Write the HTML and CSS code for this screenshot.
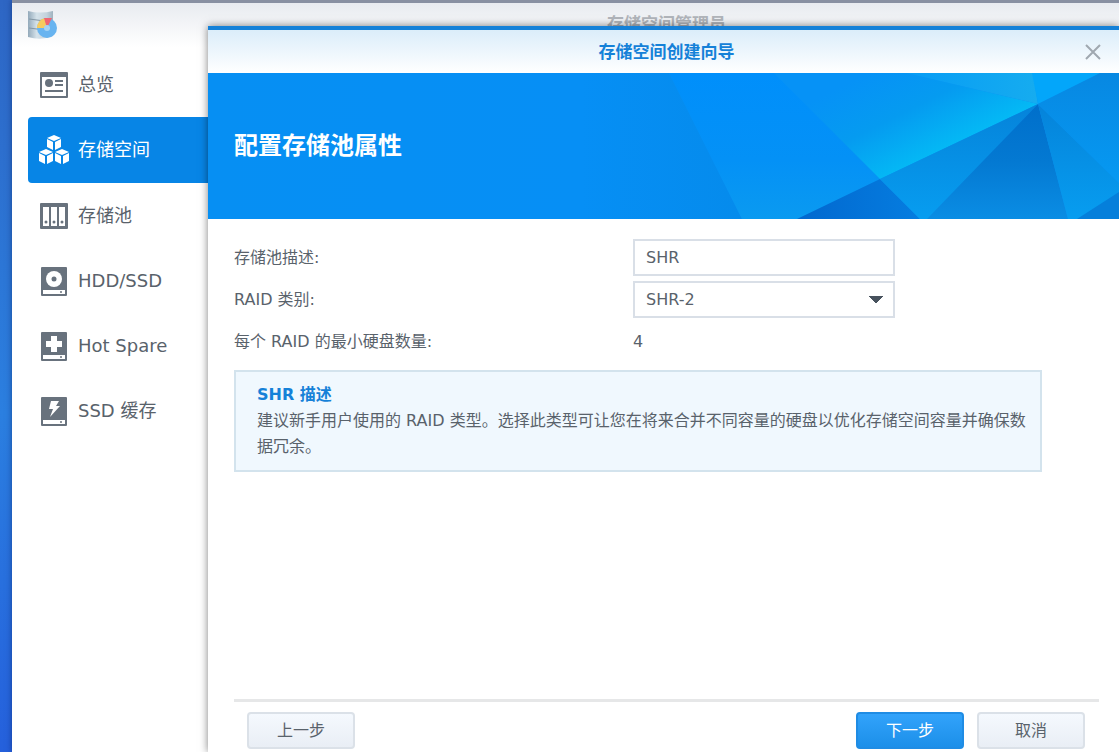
FILE: index.html
```html
<!DOCTYPE html>
<html lang="zh-CN">
<head>
    <meta charset="UTF-8">
    <meta name="viewport" content="width=device-width, initial-scale=1.0">
    <title>存储空间管理员</title>
    <link rel="stylesheet" href="styles.css">
</head>
<body>
    <div class="desktop">
        <div class="window">
            <header class="window-header">
                <svg class="app-icon" width="32" height="30" viewBox="0 0 32 30">
                    <defs>
                        <linearGradient id="disk" x1="0" x2="1" y1="0" y2="0">
                            <stop offset="0" stop-color="#93a9ba"/>
                            <stop offset="0.35" stop-color="#d5e2ea"/>
                            <stop offset="0.75" stop-color="#c3d2dc"/>
                            <stop offset="1" stop-color="#9fb2bf"/>
                        </linearGradient>
                    </defs>
                    <path d="M1 1q12 3 25 0v25q-12 5-25 1z" fill="url(#disk)"/>
                    <path d="M2 9q12 3 23 0M2 18q12 3 23 0" fill="none" stroke="#8497a5" stroke-width="1"/>
                    <circle cx="20" cy="18" r="10" fill="#68b4f0"/>
                    <path d="M20 18H10a10 10 0 0 1 8-10z" fill="#f6cb5e"/>
                    <path d="M20 18L17 8h8z" fill="#ee6573"/>
                    <circle cx="20" cy="18" r="3" fill="#a5d3f4"/>
                </svg>
                <h1 class="window-title">存储空间管理员</h1>
            </header>

            <nav class="sidebar">
                <a class="nav-item" href="#overview">
                    <svg class="nav-icon" viewBox="0 0 30 30">
                        <path fill-rule="evenodd" d="M2 2h26q1 0 1 1v24q0 1-1 1H2q-1 0-1-1V3q0-1 1-1zm1 5v19h24V7z"/>
                        <circle cx="10" cy="13" r="4"/>
                        <path d="M16 10h8v2h-8zM16 14h8v2h-8zM6 20h18v2H6z"/>
                    </svg>
                    <span>总览</span>
                </a>
                <a class="nav-item active" href="#volume">
                    <svg class="nav-icon" viewBox="0 0 30 30">
                        <g id="cube">
                            <path d="M15 0l7 3-7 3-7-3z"/>
                            <path d="M8 4l6 3v8l-6-3z"/>
                            <path d="M22 4l-6 3v8l6-3z"/>
                        </g>
                        <use href="#cube" x="-8" y="14"/>
                        <use href="#cube" x="8" y="14"/>
                    </svg>
                    <span>存储空间</span>
                </a>
                <a class="nav-item" href="#pool">
                    <svg class="nav-icon" viewBox="0 0 30 30">
                        <path fill-rule="evenodd" d="M2 2h26q1 0 1 1v24q0 1-1 1H2q-1 0-1-1V3q0-1 1-1zM4 6v19h6V6zM12 6v19h6V6zM20 6v19h6V6z"/>
                        <circle cx="7" cy="21" r="1.5"/>
                        <circle cx="15" cy="21" r="1.5"/>
                        <circle cx="23" cy="21" r="1.5"/>
                    </svg>
                    <span>存储池</span>
                </a>
                <a class="nav-item" href="#disk-list">
                    <svg class="nav-icon" viewBox="0 0 30 30">
                        <path fill-rule="evenodd" d="M3 1h24q1 0 1 1v27q0 1-1 1H3q-1 0-1-1V2q0-1 1-1zM4 24v4h22v-4z"/>
                        <path class="cutout" d="M15 5a8 8 0 1 1 0 16a8 8 0 1 1 0-16z"/>
                        <circle cx="15" cy="13" r="2.5"/>
                        <circle cx="22" cy="26" r="1"/>
                    </svg>
                    <span>HDD/SSD</span>
                </a>
                <a class="nav-item" href="#hot-spare">
                    <svg class="nav-icon" viewBox="0 0 30 30">
                        <path fill-rule="evenodd" d="M3 1h24q1 0 1 1v27q0 1-1 1H3q-1 0-1-1V2q0-1 1-1zM4 24v4h22v-4z"/>
                        <path class="cutout" d="M12 5h6v5h5v6h-5v5h-6v-5H7v-6h5z"/>
                        <circle cx="22" cy="26" r="1"/>
                    </svg>
                    <span>Hot Spare</span>
                </a>
                <a class="nav-item" href="#ssd-cache">
                    <svg class="nav-icon" viewBox="0 0 30 30">
                        <path fill-rule="evenodd" d="M3 1h24q1 0 1 1v27q0 1-1 1H3q-1 0-1-1V2q0-1 1-1zM4 24v4h22v-4z"/>
                        <path class="cutout" d="M12 5h8l-3 5h4L11 21l3-8h-4z"/>
                        <circle cx="22" cy="26" r="1"/>
                    </svg>
                    <span>SSD 缓存</span>
                </a>
            </nav>
        </div>

        <form class="dialog" role="dialog" aria-labelledby="dialogTitle">
            <header class="dialog-header">
                <h2 class="dialog-title" id="dialogTitle">存储空间创建向导</h2>
                <button type="button" class="close-btn" aria-label="关闭">
                    <svg width="16" height="16" viewBox="0 0 16 16"><path d="M1 1l14 14M15 1L1 15" fill="none" stroke="#a0a8b0" stroke-width="2"/></svg>
                </button>
            </header>

            <div class="banner">
                <svg class="banner-art" viewBox="0 0 911 146" preserveAspectRatio="xMaxYMid slice" aria-hidden="true">
                    <defs>
                        <linearGradient id="left" x1="0" x2="1" y1="0" y2="0">
                            <stop offset="0" stop-color="#068ff3"/>
                            <stop offset="0.7" stop-color="#068ff5"/>
                            <stop offset="1" stop-color="#058bec"/>
                        </linearGradient>
                        <linearGradient id="middle" x1="0" x2="0" y1="0" y2="1">
                            <stop offset="0" stop-color="#008ffb"/>
                            <stop offset="0.6" stop-color="#0491f6"/>
                            <stop offset="1" stop-color="#0a9af0"/>
                        </linearGradient>
                        <linearGradient id="glow" gradientUnits="userSpaceOnUse" x1="700" y1="-20" x2="746" y2="72">
                            <stop offset="0" stop-color="#0692f6"/>
                            <stop offset="0.5" stop-color="#059bf0"/>
                            <stop offset="1" stop-color="#04b9f5"/>
                        </linearGradient>
                        <linearGradient id="top" x1="0" x2="1" y1="0" y2="0">
                            <stop offset="0" stop-color="#079cf5"/>
                            <stop offset="1" stop-color="#16acef"/>
                        </linearGradient>
                        <linearGradient id="low" x1="0" x2="1" y1="0" y2="0">
                            <stop offset="0" stop-color="#0268cf"/>
                            <stop offset="1" stop-color="#057de0"/>
                        </linearGradient>
                        <linearGradient id="wing" x1="0" x2="0" y1="0" y2="1">
                            <stop offset="0" stop-color="#0583da"/>
                            <stop offset="1" stop-color="#079df0"/>
                        </linearGradient>
                        <linearGradient id="dark" x1="0" x2="0" y1="0" y2="1">
                            <stop offset="0" stop-color="#006fcb"/>
                            <stop offset="0.5" stop-color="#0479d2"/>
                            <stop offset="1" stop-color="#0a8de4"/>
                        </linearGradient>
                        <linearGradient id="right" x1="0" x2="0" y1="0" y2="1">
                            <stop offset="0" stop-color="#0788e2"/>
                            <stop offset="1" stop-color="#0699f2"/>
                        </linearGradient>
                    </defs>
                    <path d="M0 0H461L534 146H0z" fill="url(#left)"/>
                    <path d="M461 0H567L672 106L712 146H534z" fill="url(#middle)"/>
                    <path d="M566 0H698L830 31L672 106z" fill="url(#glow)"/>
                    <path d="M698 0H825L830 31z" fill="url(#top)"/>
                    <path d="M824 0H893L830 31z" fill="#03a6fa"/>
                    <path d="M589 146L672 106L712 146z" fill="url(#low)"/>
                    <path d="M672 106L830 31L720 146H712z" fill="url(#wing)"/>
                    <path d="M830 31L860 146H719z" fill="url(#dark)"/>
                    <path d="M830 31L911 110V146H860z" fill="url(#wing)"/>
                    <path d="M892 0H911V110L830 31z" fill="url(#right)"/>
                    <path d="M869 146L911 119V146z" fill="#057fdb"/>
                </svg>
                <h3 class="banner-title">配置存储池属性</h3>
            </div>

            <div class="dialog-body">
                <div class="form-row">
                    <label for="poolDesc">存储池描述:</label>
                    <input type="text" class="field" id="poolDesc" name="poolDesc" value="SHR">
                </div>
                <div class="form-row">
                    <label for="raidType">RAID 类别:</label>
                    <select class="field" id="raidType" name="raidType">
                        <option>SHR-2</option>
                    </select>
                </div>
                <div class="form-row">
                    <span>每个 RAID 的最小硬盘数量:</span>
                    <span>4</span>
                </div>

                <div class="note">
                    <strong class="note-title">SHR 描述</strong>
                    <p>建议新手用户使用的 RAID 类型。选择此类型可让您在将来合并不同容量的硬盘以优化存储空间容量并确保数据冗余。</p>
                </div>
            </div>

            <footer class="dialog-footer">
                <button type="button" class="btn">上一步</button>
                <span class="spacer"></span>
                <button type="submit" class="btn btn-primary">下一步</button>
                <button type="button" class="btn">取消</button>
            </footer>
        </form>
    </div>
</body>
</html>
```

FILE: styles.css
```css
* {
    box-sizing: border-box;
}
body {
    margin: 0;
    font-family: "DejaVu Sans", "Noto Sans CJK SC", sans-serif;
    font-size: 16px;
    color: #59626b;
}
h1, h2, h3, p {
    margin: 0;
}
button, input, select {
    font: inherit;
    color: inherit;
}
.desktop {
    position: relative;
    display: flex;
    min-height: 100vh;
    padding-left: 12px;
    overflow: hidden;
    background: linear-gradient(#2e66c4, #2b7fe0 55%, #2560dc);
}

/* main window */
.window {
    flex: 1;
    border-top: 3px solid #8890a2;
    background: linear-gradient(#e8ebf0, #fff 44px);
    box-shadow: 0 0 6px rgba(0, 20, 80, 0.5);
}
.window-header {
    display: flex;
    align-items: flex-start;
    height: 49px;
    padding: 7px 15px;
}
.window-title {
    flex: 1;
    padding-left: 170px;
    font-size: 17px;
    line-height: 28px;
    text-align: center;
    color: #b0b4ba;
}
.sidebar {
    display: flex;
    flex-direction: column;
    width: 196px;
    padding-left: 16px;
}
.nav-item {
    display: flex;
    align-items: center;
    gap: 9px;
    height: 65px;
    padding-left: 11px;
    font-size: 18px;
    line-height: 24px;
    color: #59626b;
    text-decoration: none;
}
.nav-icon {
    width: 30px;
    height: 30px;
    fill: #68727d;
}
.cutout {
    fill: #fff;
}
.nav-item.active {
    height: 66px;
    border-radius: 4px 0 0 4px;
    background: #0785e6;
    color: #fff;
}
.nav-item.active .nav-icon {
    fill: #fff;
}

/* wizard */
.dialog {
    position: absolute;
    top: 26px;
    right: 0;
    bottom: 0;
    left: 208px;
    display: flex;
    flex-direction: column;
    border-top: 4px solid #1581d8;
    background: #fff;
    box-shadow: 0 0 8px rgba(0, 0, 0, 0.5);
}
.dialog-header {
    display: flex;
    align-items: center;
    height: 43px;
    padding: 0 16px 0 42px;
    background: linear-gradient(#dbedfa, #fff);
}
.dialog-title {
    flex: 1;
    font-size: 17px;
    line-height: 20px;
    text-align: center;
    color: #1581d8;
}
.close-btn {
    display: flex;
    padding: 2px;
    border: none;
    background: none;
    cursor: pointer;
}
.banner {
    display: grid;
    align-items: center;
    height: 146px;
    background: #068ff3;
}
.banner-art, .banner-title {
    grid-area: 1 / 1;
}
.banner-art {
    width: 100%;
    height: 146px;
}
.banner-title {
    z-index: 1;
    padding-left: 26px;
    font-size: 24px;
    line-height: 32px;
    color: #fff;
}
.dialog-body {
    flex: 1;
    display: flex;
    flex-direction: column;
    gap: 5px;
    padding: 20px 77px 20px 26px;
}
.form-row {
    display: grid;
    grid-template-columns: 399px 262px;
    align-items: center;
    min-height: 37px;
    line-height: 20px;
}
.field {
    width: 100%;
    height: 37px;
    padding: 0 11px;
    border: 2px solid #d9dfe7;
    border-radius: 0;
    background: #fff;
    outline: none;
}
select.field {
    appearance: none;
    background: linear-gradient(to bottom right, #47525d 50%, transparent 50%) right 10px center / 7px 8px no-repeat,
                linear-gradient(to bottom left, #47525d 50%, transparent 50%) right 17px center / 7px 8px no-repeat, #fff;
}
.note {
    margin-top: 5px;
    padding: 10px 12px 10px 21px;
    border: 2px solid #d3e3ed;
    background: #f0f8fe;
    line-height: 26px;
}
.note-title {
    color: #1581d8;
}
.dialog-footer {
    display: flex;
    gap: 13px;
    margin: 0 20px 0 26px;
    padding: 10px 14px 3px 13px;
    border-top: 3px solid #e6e7e8;
}
.spacer {
    flex: 1;
}
.btn {
    width: 108px;
    height: 37px;
    padding: 0;
    border: 2px solid #dbe1e8;
    border-radius: 4px;
    background: linear-gradient(#f5f9fe, #e9eef5);
    line-height: 20px;
    cursor: pointer;
}
.btn-primary {
    border-color: #1f8ce4;
    background: linear-gradient(#32a3fb, #1c8fe9);
    color: #fff;
}
```
